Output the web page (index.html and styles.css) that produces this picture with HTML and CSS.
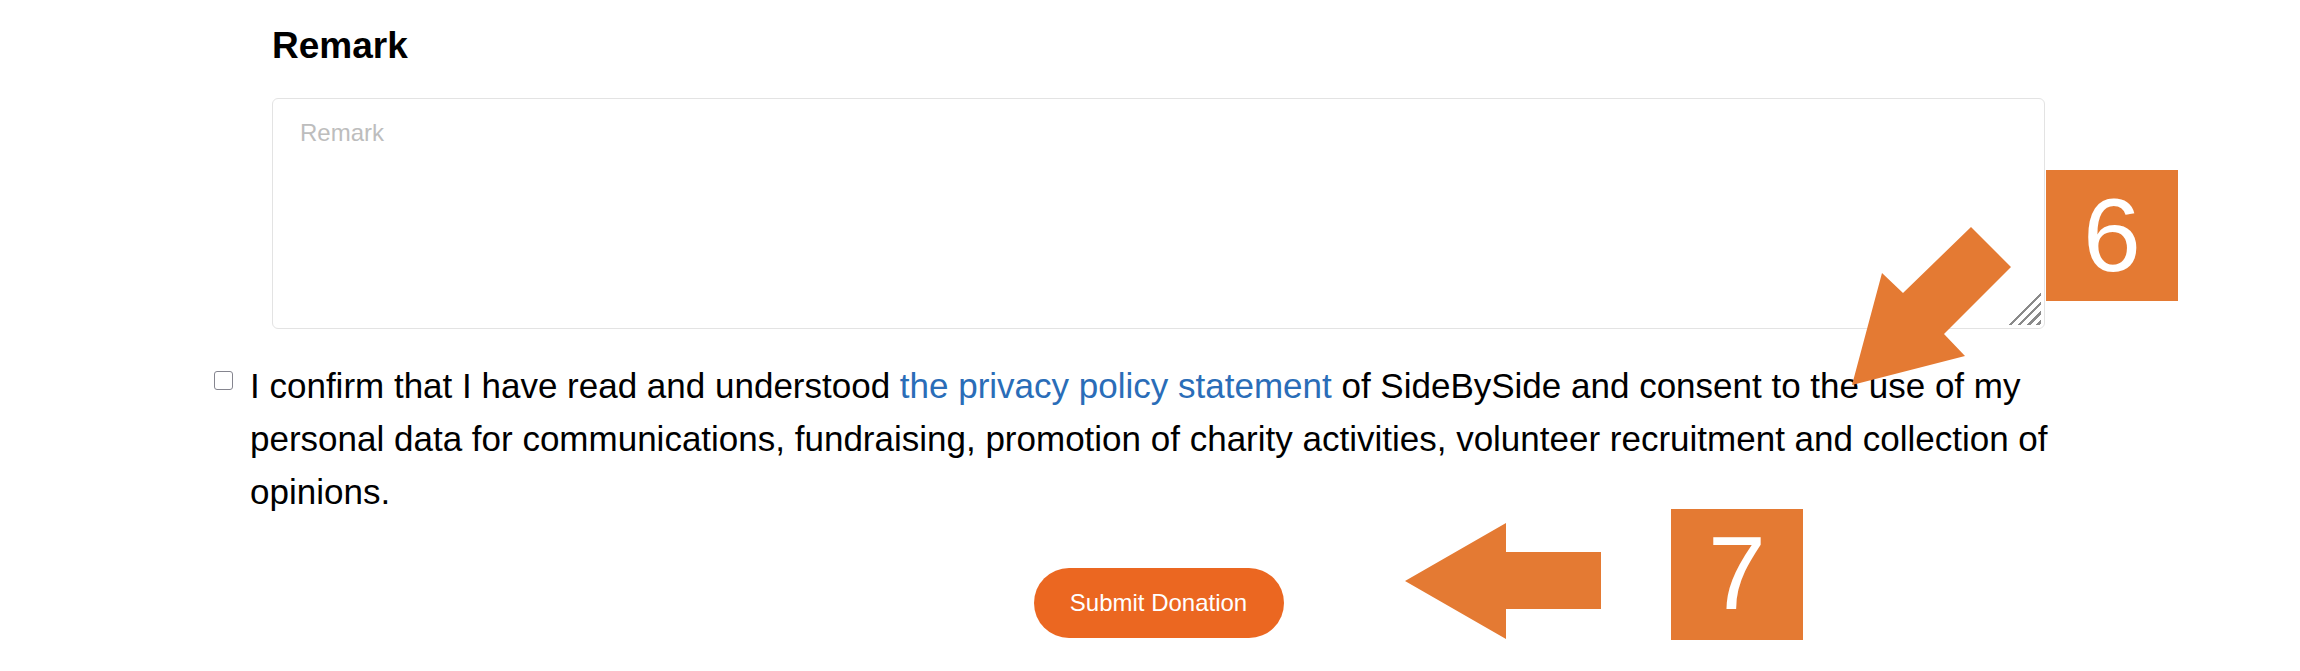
FILE: index.html
```html
<!DOCTYPE html>
<html lang="en">
<head>
<meta charset="utf-8">
<title>Remark</title>
<link rel="stylesheet" href="styles.css">
</head>
<body>
<div class="page">
  <section class="remark">
    <h2 class="label">Remark</h2>
    <textarea class="remark-input" placeholder="Remark"></textarea>
  </section>
  <div class="consent">
    <input type="checkbox" class="check">
    <p class="consent-text">I confirm that I have read and understood <a href="#">the privacy policy statement</a> of SideBySide and consent to the use of my personal data for communications, fundraising, promotion of charity activities, volunteer recruitment and collection of opinions.</p>
  </div>
  <div class="actions">
    <button class="submit" type="button">Submit Donation</button>
  </div>
  <svg class="annotations" viewBox="0 0 2300 671" xmlns="http://www.w3.org/2000/svg">
    <polygon class="mark" points="1852,385 1882,273 1903,293 1971,227 2011,267 1944,334 1965,356"/>
    <rect class="mark" x="2046" y="170" width="132" height="131"/>
    <text class="digit" x="2112" y="271">6</text>
    <polygon class="mark" points="1405,581 1506,523 1506,552 1601,552 1601,609 1506,609 1506,639"/>
    <rect class="mark" x="1671" y="509" width="132" height="131"/>
    <text class="digit" x="1737" y="609">7</text>
  </svg>
</div>
</body>
</html>
```

FILE: styles.css
```css
html, body {
  margin: 0;
  background: #fff;
}

body {
  font-family: "Liberation Sans", Arial, sans-serif;
  overflow: hidden;
}

.page {
  position: relative;
  width: 2300px;
  height: 671px;
  box-sizing: border-box;
  padding: 25px 0 0 272px;
}

.remark {
  width: 1773px;
}

.label {
  margin: 0 0 31px;
  font-size: 37px;
  line-height: 42px;
  font-weight: 700;
  color: #000;
}

.remark-input {
  display: block;
  width: 100%;
  height: 231px;
  box-sizing: border-box;
  border: 1px solid #e3e3e3;
  border-radius: 6px;
  padding: 20px 27px;
  font-family: "Liberation Sans", Arial, sans-serif;
  font-size: 24px;
  color: #333;
  resize: none;
  outline: none;
  background-color: #fff;
  background-image:
    linear-gradient(to bottom right, #fff 50%, rgba(255,255,255,0) 50%),
    repeating-linear-gradient(135deg, rgba(255,255,255,0) 0 4px, #8a8a8a 4px 6.5px);
  background-size: 34px 32px, 34px 32px;
  background-position: right 3px bottom 3px, right 3px bottom 3px;
  background-repeat: no-repeat;
}

.remark-input::placeholder {
  color: #bdbdbd;
}

.consent {
  display: flex;
  align-items: flex-start;
  gap: 17px;
  width: 1888px;
  margin: 30px 0 0 -58px;
}

.check {
  appearance: none;
  -webkit-appearance: none;
  flex: none;
  width: 19px;
  height: 19px;
  margin: 12px 0 0;
  box-sizing: border-box;
  border: 1.5px solid #85858f;
  border-radius: 3px;
  background: #fff;
}

.consent-text {
  margin: 0;
  font-size: 35px;
  line-height: 53px;
  color: #000;
}

.consent-text a {
  color: #2a6db8;
  text-decoration: none;
}

.actions {
  width: 1773px;
  display: flex;
  justify-content: center;
  margin-top: 50px;
}

.submit {
  width: 250px;
  height: 70px;
  border: none;
  border-radius: 35px;
  background: #eb6721;
  color: #fff;
  font-family: "Liberation Sans", Arial, sans-serif;
  font-size: 24px;
  padding: 0;
}

.annotations {
  position: absolute;
  left: 0;
  top: 0;
  width: 2300px;
  height: 671px;
  pointer-events: none;
}

.mark {
  fill: #e47a33;
}

.digit {
  fill: #fff;
  font-family: "Liberation Sans", Arial, sans-serif;
  font-size: 104px;
  text-anchor: middle;
}
```
